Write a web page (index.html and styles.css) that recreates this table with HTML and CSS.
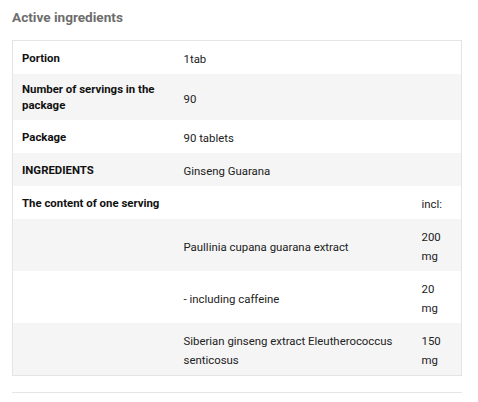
FILE: index.html
```html
<!DOCTYPE html>
<html>
<head>
<meta charset="utf-8">
<link rel="stylesheet" href="styles.css">
</head>
<body>
<div class="wrap">
  <h2 class="title">Active ingredients</h2>
  <table class="ing">
    <colgroup>
      <col class="c-label">
      <col class="c-value">
      <col class="c-amt">
    </colgroup>
    <tr>
      <th>Portion</th>
      <td colspan="2">1tab</td>
    </tr>
    <tr class="alt">
      <th>Number of servings in the package</th>
      <td colspan="2">90</td>
    </tr>
    <tr>
      <th>Package</th>
      <td colspan="2">90 tablets</td>
    </tr>
    <tr class="alt">
      <th>INGREDIENTS</th>
      <td colspan="2">Ginseng Guarana</td>
    </tr>
    <tr>
      <th>The content of one serving</th>
      <td></td>
      <td class="amt">incl:</td>
    </tr>
    <tr class="alt">
      <th></th>
      <td>Paullinia cupana guarana extract</td>
      <td class="amt">200 mg</td>
    </tr>
    <tr>
      <th></th>
      <td>- including caffeine</td>
      <td class="amt">20 mg</td>
    </tr>
    <tr class="alt">
      <th></th>
      <td>Siberian ginseng extract Eleutherococcus senticosus</td>
      <td class="amt">150 mg</td>
    </tr>
  </table>
  <div class="rule"></div>
</div>
</body>
</html>
```

FILE: styles.css
```css
html, body {
  margin: 0;
  padding: 0;
  background: #fff;
}
body {
  font-family: Roboto, "Liberation Sans", sans-serif;
  color: #222;
}
.wrap {
  padding: 0 16px 0 12px;
  width: 450px;
}
.title {
  margin: 0;
  padding-top: 7px;
  font-size: 13.6px;
  line-height: 20px;
  font-weight: 700;
  color: #6d6d6d;
  height: 33px;
}
.ing {
  width: 450px;
  border-collapse: collapse;
  border: 1px solid #e4e4e4;
  font-size: 11.4px;
  table-layout: fixed;
}
.c-label {
  width: 162px;
}
.c-amt {
  width: 49px;
}
.ing th, .ing td {
  padding: 7px 9px;
  vertical-align: middle;
  text-align: left;
}
.ing th {
  font-weight: 700;
  line-height: 16px;
  color: #111;
}
.ing td {
  padding-top: 9px;
  padding-bottom: 5px;
  line-height: 19px;
  font-weight: 400;
}
.ing tr.alt {
  background: #f5f5f5;
}
.rule {
  margin-top: 16px;
  height: 1px;
  background: #e6e6e6;
  width: 450px;
}
```
